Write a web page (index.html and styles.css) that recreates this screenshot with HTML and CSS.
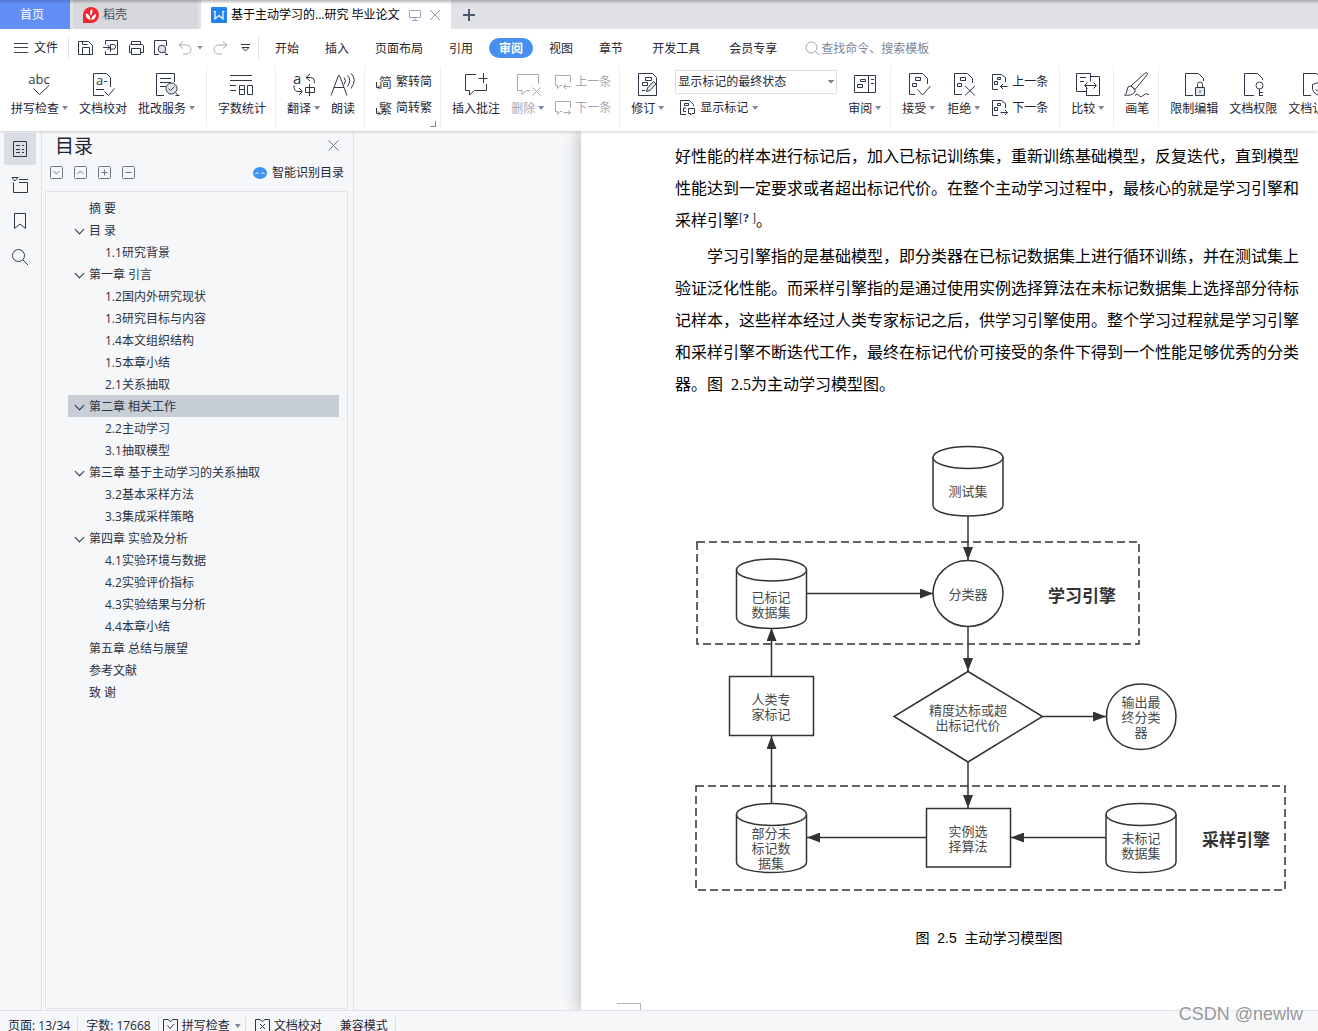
FILE: index.html
```html
<!DOCTYPE html>
<html lang="zh-CN">
<head>
<meta charset="utf-8">
<meta name="viewport" content="width=device-width, initial-scale=1">
<title>毕业论文</title>
<link rel="stylesheet" href="styles.css">
</head>
<body>
<header class="top">
  <nav class="tabs" aria-label="文档标签">
    <button class="tab tab-home">首页</button>
    <button class="tab tab-docer">
      <svg width="16" height="16" viewBox="0 0 16 16"><path d="M8 0a8 8 0 1 1 0 16H0V8a8 8 0 0 1 8-8z" fill="#f4262f"/><path d="M7.600 13C3.500 12 2.500 9.500 3 6.500c3 .8 4.600 3 4.600 6.500zM7.400 7.500C6.500 5.500 7 3.500 9 2.300c1 2 .6 4-.9 6.200zM8.600 13c-.2-3 1.400-5.200 4.400-6 .2 3-1 5.200-4.400 6z" fill="#fff"/></svg>
      <span>稻壳</span>
    </button>
    <div class="tab tab-active">
      <svg width="16" height="16" viewBox="0 0 16 16"><rect width="16" height="16" rx="1" fill="#2382f2"/><path d="M4 4v8l4-3.500 4 3.500V4" fill="none" stroke="#fff" stroke-width="1.200"/><path d="M2.500 4.500h2M11.500 4.500h2" stroke="#fff"/></svg>
      <span class="tab-title">基于主动学习的...研究 毕业论文</span>
      <svg class="tab-screen" width="12" height="12" viewBox="0 0 12 12" fill="none" stroke="#9aa5bd"><path d="M.5 1.500h11v7H.5zM6 8.500v2.500M3 11.500h6"/></svg>
      <button class="bare" aria-label="关闭标签"><svg width="12" height="12" viewBox="0 0 12 12" stroke="#8d98b3"><path d="M1 1l10 10M11 1L1 11"/></svg></button>
    </div>
    <button class="bare tab-new" aria-label="新建"><svg width="12" height="12" viewBox="0 0 12 12" stroke="#4c5872" stroke-width="2"><path d="M6 0v12M0 6h12"/></svg></button>
  </nav>

  <div class="menu">
    <button class="file"><svg width="14" height="12" viewBox="0 0 14 12" stroke="#3b4252"><path d="M0 1.500h14M0 5.500h14M0 10.500h14"/></svg>文件</button>
    <div class="quick">
      <button class="bare" aria-label="保存"><svg width="16" height="16" viewBox="0 0 16 16"><path class="ln" d="M.5 14.500v-13h10l4 4v9zM4.500 14v-6.500h7V14M4.500 1.500v3h5"/></svg></button>
      <button class="bare" aria-label="输出PDF"><svg width="16" height="16" viewBox="0 0 16 16"><path class="ln" d="M2.500 4.500v-4h12v14h-12v-3M0 7.500h7M4.500 5l2.500 2.500L4.500 10M7.500 12V4.500h2.800a2.300 2.300 0 0 1 0 4.600H7.500"/></svg></button>
      <button class="bare" aria-label="打印"><svg width="16" height="16" viewBox="0 0 16 16"><path class="ln" d="M3.500 4.500v-3h9v3M3.500 12.500h-2v-7l1-1h12l1 1v7h-3M3.500 8.500h9v6h-9z"/></svg></button>
      <button class="bare" aria-label="打印预览"><svg width="16" height="16" viewBox="0 0 16 16"><path class="ln" d="M6 14.500H1.500V.500h12V6M11.500 12l3 3M12 14.500h3"/><circle cx="9" cy="9" r="3.800" fill="#dfe3ea" stroke="#2f3747"/></svg></button>
      <button class="bare undo" aria-label="撤销"><svg width="16" height="16" viewBox="0 0 16 16" fill="none" stroke="#a3abb9"><path d="M5 1.500l-4 3.500 4 3.500M1 5h7.500a4.500 4.500 0 0 1 0 9H5"/></svg><i class="caret"></i></button>
      <button class="bare" aria-label="恢复"><svg width="16" height="16" viewBox="0 0 16 16" fill="none" stroke="#a3abb9"><path d="M11 1.500L15 5l-4 3.500M15 5H6.500a4.500 4.500 0 0 0 0 9H10"/></svg></button>
      <button class="bare more" aria-label="更多"><svg width="9" height="8" viewBox="0 0 9 8" fill="none" stroke="#2f3747"><path d="M0 .500h9M1 3.500h7L4.500 7z"/></svg></button>
    </div>
    <nav class="nav">
      <a href="#">开始</a><a href="#">插入</a><a href="#">页面布局</a><a href="#">引用</a><a href="#" class="on">审阅</a><a href="#">视图</a><a href="#">章节</a>
      <span class="nav-more"><a href="#">开发工具</a><a href="#">会员专享</a></span>
    </nav>
    <label class="find"><svg width="15" height="15" viewBox="0 0 15 15" fill="none" stroke="#9aa1b0"><circle cx="6.500" cy="6.500" r="5.500"/><path d="M10.500 10.500l4 4"/></svg><input type="text" placeholder="查找命令、搜索模板" aria-label="查找命令"></label>
  </div>

  <div class="ribbon">
    <div class="group group-first">
      <button class="tool"><svg viewBox="0 0 26 26" class="big"><text x="12" y="13" font-size="13" text-anchor="middle">abc</text><path class="ln" d="M6.500 17.500l6 6L22 14.500"/></svg><span>拼写检查<i class="caret"></i></span></button>
      <button class="tool"><svg viewBox="0 0 26 26" class="big"><path class="ln" d="M14 24.500H3.500v-22h13l4 4V16M6 18.500h8M14.500 20.500l4 4 6-7"/><text x="6" y="14" font-size="13">a-</text></svg><span>文档校对</span></button>
      <button class="tool"><svg viewBox="0 0 26 26" class="big"><path class="ln" d="M10 24.500H2.500v-22h18V11M6 7.500h11M6 11.500h11M6 15.500h6M21 21l4 4M21.500 24.500h4"/><circle cx="17.500" cy="17.500" r="5.500" fill="#dfe3ea" stroke="#2f3747"/><path class="ln" d="M14.500 17.500l2 2 4-4"/></svg><span>批改服务<i class="caret"></i></span></button>
    </div>
    <div class="group">
      <button class="tool"><svg viewBox="0 0 26 26" class="big"><path class="ln" d="M1 4.500h22M1 9.500h22M1 14.500h6M1 19.500h6M10.500 14.500h5v9h-5zM10.500 18.500h5M18.500 14.500h5v9h-5z"/></svg><span>字数统计</span></button>
    </div>
    <div class="group">
      <button class="tool"><svg viewBox="0 0 26 26" class="big"><text x="2" y="13" font-size="15">a</text><path class="ln" d="M19 3l-4 3.500 4 3.500M15 6.500h4.500a4 4 0 0 1 4 4V12M3 14.500c0 4 1 6 4 6h3.500M8 17l3.500 3.500L8 24"/><path class="ln" d="M14.500 16.500h9v5h-9zM18.500 13v12"/></svg><span>翻译<i class="caret"></i></span></button>
      <button class="tool"><svg viewBox="0 0 26 26" class="big"><path class="ln" d="M1 24.500L8.500 4.500h1L17 24.500M4 16.500h10M14 6.500q3 3 0 7M17.500 4.500q4.500 4.500 0 11M21 2.500q6.500 6 0 15"/></svg><span>朗读</span></button>
    </div>
    <div class="group group-rows">
      <div class="rows">
        <button class="row"><svg viewBox="0 0 16 16" class="sm"><text x="3" y="13" font-size="13">简</text><path class="ln" d="M.5 8v5.500h3M2 11.500l2 2-2 2"/></svg>繁转简</button>
        <button class="row"><svg viewBox="0 0 16 16" class="sm"><text x="3" y="13" font-size="13">繁</text><path class="ln" d="M.5 8v5.500h3M2 11.500l2 2-2 2"/></svg>简转繁</button>
      </div>
      <i class="corner"></i>
    </div>
    <div class="group group-rows">
      <button class="tool"><svg viewBox="0 0 26 26" class="big"><path class="ln" d="M13 3.500H2.500v16h4V24l5-4.500h12V13M20.500 2v10M15.500 7.500h9"/></svg><span>插入批注</span></button>
      <button class="tool off"><svg viewBox="0 0 26 26" class="big"><path class="ln" d="M15 19.500h-3.500l-4.500 4v-4H2.500v-16h21V13M17.500 16.500l8 8M25.500 16.500l-8 8"/></svg><span>删除<i class="caret"></i></span></button>
      <div class="rows">
        <button class="row off"><svg viewBox="0 0 16 16" class="sm"><path class="ln" d="M7 11.500H5l-2.500 3v-3h-2v-10h15V8M15.500 12.500h-7M11 10l-2.500 2.500L11 15"/></svg>上一条</button>
        <button class="row off"><svg viewBox="0 0 16 16" class="sm"><path class="ln" d="M7 11.500H5l-2.500 3v-3h-2v-10h15V8M8.500 12.500h7M13 10l2.500 2.500L13 15"/></svg>下一条</button>
      </div>
    </div>
    <div class="group">
      <button class="tool"><svg viewBox="0 0 26 26" class="big"><path class="ln" d="M3.500 2.500h14l4 4v18h-18zM10.500 6.500h6v3h-6zM7.500 11.500h5v3h-5zM7 19.500h3"/><path d="M11.500 20.500l1-3.500 6-6.500 2.500 2.500-6 6.500z" fill="#dfe3ea" stroke="#2f3747"/></svg><span>修订<i class="caret"></i></span></button>
      <div class="rows">
        <select class="state" aria-label="显示状态"><option>显示标记的最终状态</option></select>
        <button class="row show"><svg viewBox="0 0 16 16" class="sm"><path class="ln" d="M6 14.500H.5V.500h9l4 4V6M4.500 3.500h4v2h-4zM3.500 8v3.500H6M3.500 8H6M8.500 8.500h6v5h-2.500l-1.500 1.500v-1.500h-2z"/></svg>显示标记<i class="caret"></i></button>
      </div>
      <button class="tool"><svg viewBox="0 0 26 26" class="big"><path class="ln" d="M2.500 4.500h21v17h-21zM16.500 4.500v17M8.500 8.500h5v2h-5zM5.500 13.500h5v3h-5zM19 8.500h3M19 12.500h3"/></svg><span>审阅<i class="caret"></i></span></button>
    </div>
    <div class="group group-track">
      <button class="tool"><svg viewBox="0 0 26 26" class="big"><path class="ln" d="M9 23.500H3.500v-21h13l5 5V13M9.500 6.500h5v3h-5zM6.500 12.500h4v3h-4zM11.500 18.500l5 5.500 8-9"/></svg><span>接受<i class="caret"></i></span></button>
      <button class="tool"><svg viewBox="0 0 26 26" class="big"><path class="ln" d="M11 23.500H3.500v-21h13l5 5V12M9.500 6.500h5v3h-5zM6.500 12.500h4v3h-4zM14 15l10 9.500M24 15l-10 9.500"/></svg><span>拒绝<i class="caret"></i></span></button>
      <div class="rows">
        <button class="row"><svg viewBox="0 0 16 16" class="sm"><path class="ln" d="M6 15.500H.5V.500h9l4 3V8M5.500 3.500h3v2h-3zM2.500 7.500h3v3h-3zM15.500 12.500h-7M11 10l-2.500 2.500L11 15"/></svg>上一条</button>
        <button class="row"><svg viewBox="0 0 16 16" class="sm"><path class="ln" d="M6 15.500H.5V.500h9l4 3V8M5.500 3.500h3v2h-3zM2.500 7.500h3v3h-3zM8.500 12.500h7M13 10l2.500 2.500L13 15"/></svg>下一条</button>
      </div>
    </div>
    <div class="group">
      <button class="tool"><svg viewBox="0 0 26 26" class="big"><path class="ln" d="M11 20.500H1.500v-18h14v8M5 6.500h6M5 10.500h4M15.500 5.500h9v19h-13v-9M10 14.500h11M12.500 11.500l-3 3 3 3M18.500 11.500l3 3-3 3"/></svg><span>比较<i class="caret"></i></span></button>
    </div>
    <div class="group">
      <button class="tool"><svg viewBox="0 0 26 26" class="big"><path class="ln" d="M7 15L20.500 2.500q3-2 3 1L11 18.500M7 15q-4 0-4 4c0 3-1.500 4.500-2.500 5 4 1 9-.5 10.500-3v-2.500zM7 15l4 3.500M11 24.500q2-3 4 0t4 0q3-3 6-1"/></svg><span>画笔</span></button>
    </div>
    <div class="group">
      <button class="tool"><svg viewBox="0 0 26 26" class="big"><path class="ln" d="M12 24.500H4.500v-22h13l5 5V10"/><path d="M14.500 16.500h9v8h-9z" fill="#dfe3ea" stroke="#2f3747"/><path class="ln" d="M16.500 16.500v-3a2.500 2.500 0 0 1 5 0v3M19 19.500v2"/></svg><span>限制编辑</span></button>
      <button class="tool"><svg viewBox="0 0 26 26" class="big"><path class="ln" d="M14 24.500H4.500v-22h13l5 5V9M19.500 18v7M20 21.500h3M20 24.500h3"/><circle class="ln" cx="19.500" cy="14.500" r="3.500"/></svg><span>文档权限</span></button>
      <button class="tool"><svg viewBox="0 0 26 26" class="big"><path class="ln" d="M12 24.500H4.500v-22h13l5 5V9M19.500 11.500l6 2v5q-1 4-6 6-5-2-6-6v-5zM16.500 18l2.500 2.500 5-4"/></svg><span>文档认证</span></button>
    </div>
  </div>
</header>

<main class="work">
  <nav class="rail" aria-label="侧栏">
    <button class="rail-btn on" aria-label="目录"><svg width="16" height="18" viewBox="0 0 16 18"><path class="ln" d="M1.500 1.500h13v15h-13zM4 5.500h4M4 9.500h4M4 12.500h4M10 5.500h2M10 9.500h2M10 12.500h2"/></svg></button>
    <button class="rail-btn" aria-label="章节"><svg width="18" height="18" viewBox="0 0 18 18"><path class="ln" d="M2.500 6.500v10h14v-10H8M8 3.500h9M1 1.500h6L4 5z"/></svg></button>
    <button class="rail-btn" aria-label="书签"><svg width="16" height="18" viewBox="0 0 16 18"><path class="ln" d="M2.500 1.500h11v15L8 12l-5.500 4.500z"/></svg></button>
    <button class="rail-btn" aria-label="查找"><svg width="18" height="18" viewBox="0 0 18 18"><circle class="ln" cx="7.500" cy="7.500" r="6"/><path class="ln" d="M12 12l5 5"/></svg></button>
  </nav>

  <aside class="panel">
    <div class="panel-head"><h2>目录</h2><button class="bare" aria-label="关闭"><svg width="11" height="11" viewBox="0 0 11 11" stroke="#6d7890"><path d="M.5.500l10 10M10.500.500l-10 10"/></svg></button></div>
    <div class="panel-tools">
      <button class="bare" aria-label="展开"><svg width="13" height="13" viewBox="0 0 13 13" class="box"><rect x=".5" y=".5" width="12" height="12" rx="1"/><path d="M3.500 5l3 3 3-3"/></svg></button>
      <button class="bare" aria-label="收起"><svg width="13" height="13" viewBox="0 0 13 13" class="box"><rect x=".5" y=".5" width="12" height="12" rx="1"/><path d="M3.500 8l3-3 3 3"/></svg></button>
      <button class="bare" aria-label="增加级别"><svg width="13" height="13" viewBox="0 0 13 13" class="box"><rect x=".5" y=".5" width="12" height="12" rx="1"/><path d="M3.500 6.500h6M6.500 3.500v6"/></svg></button>
      <button class="bare" aria-label="减少级别"><svg width="13" height="13" viewBox="0 0 13 13" class="box"><rect x=".5" y=".5" width="12" height="12" rx="1"/><path d="M3.500 6.500h6"/></svg></button>
      <button class="smart"><svg width="14" height="12" viewBox="0 0 14 12"><ellipse cx="7" cy="6" rx="7" ry="6" fill="#3f93f2"/><path d="M2.500 7l1.500-1.500L5.500 7M8.500 7L10 5.500 11.500 7" stroke="#fff" fill="none"/></svg>智能识别目录</button>
    </div>
    <ul class="tree">
      <li><a href="#">摘 要</a></li>
      <li class="open"><a href="#">目 录</a></li>
      <li class="sub"><a href="#">1.1研究背景</a></li>
      <li class="open"><a href="#">第一章 引言</a></li>
      <li class="sub"><a href="#">1.2国内外研究现状</a></li>
      <li class="sub"><a href="#">1.3研究目标与内容</a></li>
      <li class="sub"><a href="#">1.4本文组织结构</a></li>
      <li class="sub"><a href="#">1.5本章小结</a></li>
      <li class="sub"><a href="#">2.1关系抽取</a></li>
      <li class="open current"><a href="#">第二章 相关工作</a></li>
      <li class="sub"><a href="#">2.2主动学习</a></li>
      <li class="sub"><a href="#">3.1抽取模型</a></li>
      <li class="open"><a href="#">第三章 基于主动学习的关系抽取</a></li>
      <li class="sub"><a href="#">3.2基本采样方法</a></li>
      <li class="sub"><a href="#">3.3集成采样策略</a></li>
      <li class="open"><a href="#">第四章 实验及分析</a></li>
      <li class="sub"><a href="#">4.1实验环境与数据</a></li>
      <li class="sub"><a href="#">4.2实验评价指标</a></li>
      <li class="sub"><a href="#">4.3实验结果与分析</a></li>
      <li class="sub"><a href="#">4.4本章小结</a></li>
      <li><a href="#">第五章 总结与展望</a></li>
      <li><a href="#">参考文献</a></li>
      <li><a href="#">致 谢</a></li>
    </ul>
  </aside>

  <section class="canvas">
    <article class="sheet">
      <p>好性能的样本进行标记后，加入已标记训练集，重新训练基础模型，反复迭代，直到模型性能达到一定要求或者超出标记代价。在整个主动学习过程中，最核心的就是学习引擎和采样引擎<sup>[<b>?</b> ]</sup>。</p>
      <p class="indent">学习引擎指的是基础模型，即分类器在已标记数据集上进行循环训练，并在测试集上验证泛化性能。而采样引擎指的是通过使用实例选择算法在未标记数据集上选择部分待标记样本，这些样本经过人类专家标记之后，供学习引擎使用。整个学习过程就是学习引擎和采样引擎不断迭代工作，最终在标记代价可接受的条件下得到一个性能足够优秀的分类器。图&nbsp; 2.5为主动学习模型图。</p>
      <figure>
        <svg class="chart" viewBox="675 430 624 480" role="img" aria-label="主动学习模型图">
          <defs><marker id="head" viewBox="0 0 13 10" refX="13" refY="5" markerWidth="13" markerHeight="10" markerUnits="userSpaceOnUse" orient="auto"><path d="M0 0l13 5-13 5z" fill="#333"/></marker></defs>
          <g class="shape dashed"><path d="M697 542H1139V644H697z"/><path d="M696 786H1285V890H696z"/></g>
          <g class="shape">
            <ellipse cx="968" cy="457.500" rx="35" ry="11"/><path d="M933 457.500V505C933 519.500 1003 519.500 1003 505V457.500"/>
            <ellipse cx="771.500" cy="570" rx="35" ry="11"/><path d="M736.500 570V617.500C736.500 632 806.500 632 806.500 617.500V570"/>
            <ellipse cx="771.500" cy="814.500" rx="35" ry="11"/><path d="M736.500 814.500V862C736.500 876 806.500 876 806.500 862V814.500"/>
            <ellipse cx="1141" cy="814.500" rx="35" ry="11"/><path d="M1106 814.500V862C1106 876 1176 876 1176 862V814.500"/>
            <ellipse cx="968" cy="593.500" rx="35" ry="33"/>
            <path d="M1106.500 716.500C1106.500 697 1121 684 1141 684S1176 697 1176 716.500 1161 749.500 1141 749.500 1106.500 736 1106.500 716.500z"/>
            <path d="M729.500 676.500h84v59h-84zM926.500 808.500h84v58.500h-84zM968 671.500L1042.500 716.500 968 762 894 716.500z"/>
          </g>
          <g class="shape wire">
            <path d="M968 516V560"/><path d="M968 626V671"/><path d="M807 593.500H933"/><path d="M771.500 676V628"/><path d="M771.500 803V736"/><path d="M1043 716.500H1106"/><path d="M968 762V808"/><path d="M1106 837.500H1011"/><path d="M926 837.500H807"/>
          </g>
          <g class="node">
            <text x="968" y="496">测试集</text>
            <text x="968" y="599">分类器</text>
            <text x="771" y="602">已标记</text><text x="771" y="617">数据集</text>
            <text x="771" y="704">人类专</text><text x="771" y="719">家标记</text>
            <text x="968" y="715">精度达标或超</text><text x="968" y="730">出标记代价</text>
            <text x="1141" y="707">输出最</text><text x="1141" y="722">终分类</text><text x="1141" y="737">器</text>
            <text x="771" y="838">部分未</text><text x="771" y="853">标记数</text><text x="771" y="868">据集</text>
            <text x="968" y="836">实例选</text><text x="968" y="851">择算法</text>
            <text x="1141" y="843">未标记</text><text x="1141" y="858">数据集</text>
            <text class="zone" x="1082" y="602">学习引擎</text>
            <text class="zone" x="1236" y="846">采样引擎</text>
          </g>
        </svg>
        <figcaption>图&nbsp; 2.5&nbsp; 主动学习模型图</figcaption>
      </figure>
      <div class="crop"></div>
    </article>
  </section>
</main>

<footer class="status">
  <span class="cell">页面: 13/34</span>
  <span class="cell">字数: 17668</span>
  <button class="cell tight"><svg width="15" height="15" viewBox="0 0 15 15"><path class="ln" d="M5 1.500H.5v13h14v-13H10M5 1.500l2.500 2 2.500-2M4.500 7.500l2.500 3 4-4.500"/></svg>拼写检查<i class="caret"></i></button>
  <button class="cell flat"><svg width="15" height="15" viewBox="0 0 15 15"><path class="ln" d="M5 1.500H.5v13h14v-13H10M5 1.500l2.500 2 2.500-2M5 6l5 5M10 6l-5 5"/></svg>文档校对</button>
  <span class="cell">兼容模式</span>
</footer>
<div class="mark">CSDN @newlw</div>
</body>
</html>
```
FILE: styles.css
```css
* { box-sizing: border-box; }

body {
  margin: 0;
  height: 100vh;
  display: flex;
  flex-direction: column;
  overflow: hidden;
  position: relative;
  background: #f5f7f9;
  color: #1f2533;
  font: 12px/18px "Open Sans", "Noto Sans CJK SC", sans-serif;
  text-spacing-trim: space-all;
}

button, input, select { font: inherit; color: inherit; }
button { border: 0; padding: 0; background: none; white-space: nowrap; }
a { color: inherit; text-decoration: none; }
svg { display: block; flex: none; }
.bare { display: flex; align-items: center; }
.ln { fill: none; stroke: #2f3747; }
svg text { fill: #2f3747; }

.caret {
  display: inline-block;
  width: 6px;
  height: 4px;
  margin-left: 3px;
  vertical-align: 3px;
  background: #7b86a0;
  clip-path: polygon(0 0, 100% 0, 50% 100%);
}

/* document tabs */
.top { flex: none; background: #fff; position: relative; z-index: 1; box-shadow: 0 1px 3px rgba(0, 0, 0, .18); }
.tabs {
  display: flex;
  height: 29px;
  background: linear-gradient(#a8a9ac, #e1e2e6 4px);
}
.tab { display: flex; align-items: center; height: 29px; }
.tab-home { width: 70px; justify-content: center; padding-right: 6px; color: #fff; background: linear-gradient(#5279cc, #628ff7 4px); }
.tab-docer { width: 125px; margin-left: 3px; padding-left: 10px; gap: 4px; color: #444b5a; background: linear-gradient(#a3a4a7, #d7d8dc 4px); }
.tab-active { width: 250px; margin-left: 3px; padding-left: 10px; gap: 4px; color: #000; background: linear-gradient(#b8b8b8, #fff 4px); }
.tab-screen { margin: 0 4px 0 5px; }
.tab-new { padding: 0 12px; }

/* menu row */
.menu { display: flex; align-items: center; height: 37px; padding-left: 14px; }
.file { display: flex; align-items: center; gap: 6px; padding-right: 10px; border-right: 1px solid #e3e5ea; height: 24px; }
.quick { display: flex; align-items: center; gap: 9px; padding: 0 8px 0 9px; border-right: 1px solid #e3e5ea; height: 24px; }
.more { padding-left: 4px; }
.nav { display: flex; align-items: center; padding-left: 3px; white-space: nowrap; }
.nav a { padding: 2px 13px 0; }
.nav .on { margin: 0 3px; padding: 2px 10px 0; border-radius: 10px; background: #4590f2; color: #fff; font-weight: 700; }
.nav-more { display: flex; gap: 3px; margin-left: 3px; }
.find { display: flex; align-items: center; gap: 1px; margin-left: 15px; padding-top: 2px; }
.find input { width: 120px; border: 0; padding: 0; background: none; outline: 0; }
.find input::placeholder { color: #7d8798; opacity: 1; }

/* ribbon */
.ribbon { display: flex; height: 65px; overflow: hidden; }
.group {
  flex: none;
  display: flex;
  gap: 11px;
  height: 61px;
  padding: 5px 9px 0 11px;
  border-right: 1px solid #edeef1;
  position: relative;
}
.group-first { padding-right: 11px; }
.group-rows { padding-right: 8px; }
.group-track { padding-right: 11px; gap: 12px; }
.group:last-child { gap: 11px; border: 0; }
.tool { display: flex; flex-direction: column; align-items: center; gap: 3px; height: 47px; }
.big { width: 26px; height: 26px; margin: 0 -1px; }
.sm { width: 16px; height: 16px; }
.rows { display: flex; flex-direction: column; gap: 8px; padding-top: 2px; }
.row { display: flex; align-items: center; gap: 4px; height: 18px; }
.row .caret { margin-left: 0; }
.show { padding-left: 5px; }
.off { color: #a4a8b0; }
.off .ln { stroke: #a4a8b0; }
.corner { position: absolute; right: 4px; bottom: 0; width: 6px; height: 6px; border: solid #7f879a; border-width: 0 1px 1px 0; }
.state {
  width: 162px;
  height: 24px;
  margin: -3px 0;
  padding: 0 2px;
  appearance: none;
  border: 1px solid #dcdfe5;
  border-radius: 2px;
  background: linear-gradient(45deg, transparent 50%, #7b86a0 50%) 152px 9px / 3px 4px no-repeat, linear-gradient(-45deg, transparent 50%, #7b86a0 50%) 155px 9px / 3px 4px no-repeat, #fff;
}

/* work area */
.work { flex: 1; min-height: 0; display: flex; }
.rail { flex: none; width: 42px; padding: 2px 0 0 4px; display: flex; flex-direction: column; gap: 4px; border-right: 1px solid #e1e3e8; }
.rail-btn { display: grid; place-items: center; width: 32px; height: 32px; border-radius: 2px; }
.rail-btn.on { background: #d9dee5; }

.panel { flex: none; width: 312px; padding: 0 5px 1px 3px; display: flex; flex-direction: column; border-right: 1px solid #e1e3e8; }
.panel-head { display: flex; justify-content: space-between; padding: 0 9px 0 10px; height: 29px; align-items: center; }
h2 { margin: 0; font-size: 19px; font-weight: 400; line-height: 28px; }
.panel-tools { display: flex; align-items: center; gap: 11px; height: 24px; padding: 0 4px 0 5px; }
.box { fill: none; stroke: #6f7786; }
.smart { display: flex; align-items: center; gap: 5px; margin-left: auto; padding-top: 2px; }
.tree { flex: 1; margin: 7px 0 0; padding: 5px 8px 0 22px; list-style: none; border: 1px solid #e1e3e8; border-radius: 2px; color: #2b3242; }
.tree li { height: 22px; display: flex; align-items: center; padding: 2px 0 0 21px; }
.tree .sub { padding-left: 37px; }
.tree .open { padding-left: 8px; gap: 7px; }
.tree .open::before { content: ""; width: 6px; height: 6px; margin: -3px -1px 0 0; border: solid #2b3242; border-width: 0 1px 1px 0; transform: rotate(45deg); }
.tree .current { background: #c7ced6; }

/* document page */
.canvas { flex: 1; min-width: 0; overflow: hidden; padding-left: 227px; }
.sheet {
  width: 812px;
  min-height: 100%;
  padding: 10px 94px 0;
  background: #fff;
  box-shadow: 0 0 16px rgba(60, 64, 70, .4);
  color: #000;
  font: 16px/32px "Liberation Serif", "Noto Sans CJK SC", serif;
}
.sheet p { margin: 0 0 4px; }
.indent { text-indent: 32px; }
sup { font-size: 12px; line-height: 14px; vertical-align: 4px; color: #15254c; }
figure { margin: 29px 0 0; }
.chart { width: 100%; }
.shape { fill: none; stroke: #333; stroke-width: 1.5; }
.dashed { stroke-dasharray: 8 4; }
.wire path { marker-end: url(#head); }
.node { font: 13px "Noto Sans CJK SC", sans-serif; text-anchor: middle; }
.node text { fill: #484848; }
.node .zone { font-size: 17px; font-weight: 700; fill: #333; }
figcaption { margin-top: 17px; padding-left: 4px; font: 14px/22px "Liberation Sans", "Noto Sans CJK SC", sans-serif; text-align: center; }
.crop { width: 24px; height: 8px; margin: 54px 0 0 -58px; border: solid #b5b5b5; border-width: 1px 1px 0 0; }

/* status bar */
.status { flex: none; display: flex; height: 21px; padding-top: 6px; border-top: 1px solid #dfe1ea; white-space: nowrap; overflow: hidden; background: #f5f7f9; }
.cell { display: flex; align-items: center; gap: 4px; height: 18px; padding: 0 7px 0 8px; border-right: 1px solid #dcdfe5; }
.cell svg { margin-top: -2px; }
.cell .caret { margin-left: 1px; }
.cell.tight { padding: 0 4px; }
.cell.flat { padding: 0 10px 0 9px; border: 0; }
.mark { position: absolute; right: 15px; bottom: 5px; font: 18px/24px "Liberation Sans", sans-serif; color: #96989c; text-shadow: 1px 1px 0 #fff; }
```
